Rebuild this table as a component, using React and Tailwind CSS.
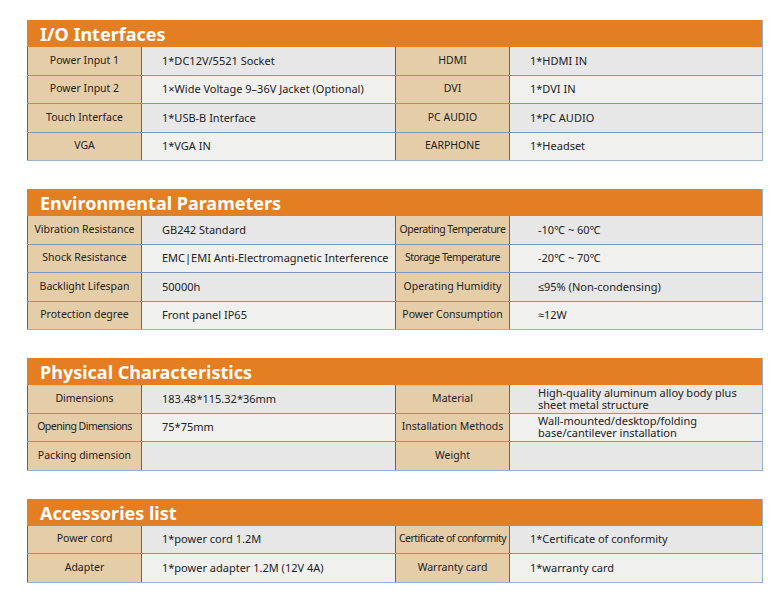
const SECTIONS = [
  {
    title: "I/O Interfaces",
    rows: [
      ["Power Input 1", "1*DC12V/5521 Socket", "HDMI", "1*HDMI IN"],
      ["Power Input 2", "1×Wide Voltage 9–36V Jacket (Optional)", "DVI", "1*DVI IN"],
      ["Touch Interface", "1*USB-B Interface", "PC AUDIO", "1*PC AUDIO"],
      ["VGA", "1*VGA IN", "EARPHONE", "1*Headset"],
    ],
  },
  {
    title: "Environmental Parameters",
    wide: true,
    rows: [
      ["Vibration Resistance", "GB242 Standard", "Operating Temperature", "-10℃ ~ 60℃"],
      ["Shock Resistance", "EMC|EMI Anti-Electromagnetic Interference", "Storage Temperature", "-20℃ ~ 70℃"],
      ["Backlight Lifespan", "50000h", "Operating Humidity", "≤95% (Non-condensing)"],
      ["Protection degree", "Front panel IP65", "Power Consumption", "≈12W"],
    ],
  },
  {
    title: "Physical Characteristics",
    wide: true,
    rows: [
      ["Dimensions", "183.48*115.32*36mm", "Material", "High-quality aluminum alloy body plus\nsheet metal structure"],
      ["Opening Dimensions", "75*75mm", "Installation Methods", "Wall-mounted/desktop/folding\nbase/cantilever installation"],
      ["Packing dimension", "", "Weight", ""],
    ],
  },
  {
    title: "Accessories list",
    rows: [
      ["Power cord", "1*power cord 1.2M", "Certificate of conformity", "1*Certificate of conformity"],
      ["Adapter", "1*power adapter 1.2M (12V 4A)", "Warranty card", "1*warranty card"],
    ],
  },
];

// 긴 라벨은 원본처럼 자간을 좁혀 칸에 맞춘다.
const TIGHT = ["Operating Temperature", "Storage Temperature", "Certificate of conformity", "Opening Dimensions"];

export default function App() {
  return (
    <div
      className="min-h-[601px] w-[779px] bg-white pl-[27px] pt-[20px]"
      style={{ fontFamily: '"Noto Sans", "Liberation Sans", sans-serif' }}
    >
      <div className="flex w-[736px] flex-col gap-[28px]">
        {SECTIONS.map((s) => (
          <SpecTable key={s.title} section={s} />
        ))}
      </div>
    </div>
  );
}

function SpecTable({ section }) {
  return (
    <section className="border-r border-[#9bb0cf]">
      <h2 className="flex h-[27px] items-center bg-[#e47e22] pl-[13px] pt-[1px] text-[18px] font-bold leading-none text-white">
        {section.title}
      </h2>
      {section.rows.map((r, i) => (
        <div
          key={i}
          className={`grid h-[28.5px] grid-cols-[115px_253px_115px_253px] border-b text-[11px] text-[#222] ${
            i === section.rows.length - 1 ? "border-[#9bb0cf]" : "border-[#7e97bd]"
          } ${i % 2 ? "bg-[#f0f0ee]" : "bg-[#e7e7e7]"}`}
        >
          <Label text={r[0]} />
          <div className="flex items-center pl-[20px]">{r[1]}</div>
          <Label text={r[2]} />
          <Value text={r[3]} wide={section.wide} />
        </div>
      ))}
    </section>
  );
}

function Label({ text }) {
  const tight = TIGHT.includes(text);
  return (
    <div
      className={`flex items-center justify-center whitespace-nowrap border-x border-[#4a6a93] bg-[#e5cda8] text-[10.5px] ${
        tight ? "tracking-[-0.5px]" : ""
      }`}
    >
      {text}
    </div>
  );
}

function Value({ text, wide }) {
  const lines = text.split("\n");
  return (
    <div className={`flex flex-col justify-center ${wide ? "pl-[28px]" : "pl-[20px]"}`}>
      {lines.map((l, i) => (
        <span key={i} className={lines.length > 1 ? "leading-[12px]" : ""}>
          {l}
        </span>
      ))}
    </div>
  );
}
